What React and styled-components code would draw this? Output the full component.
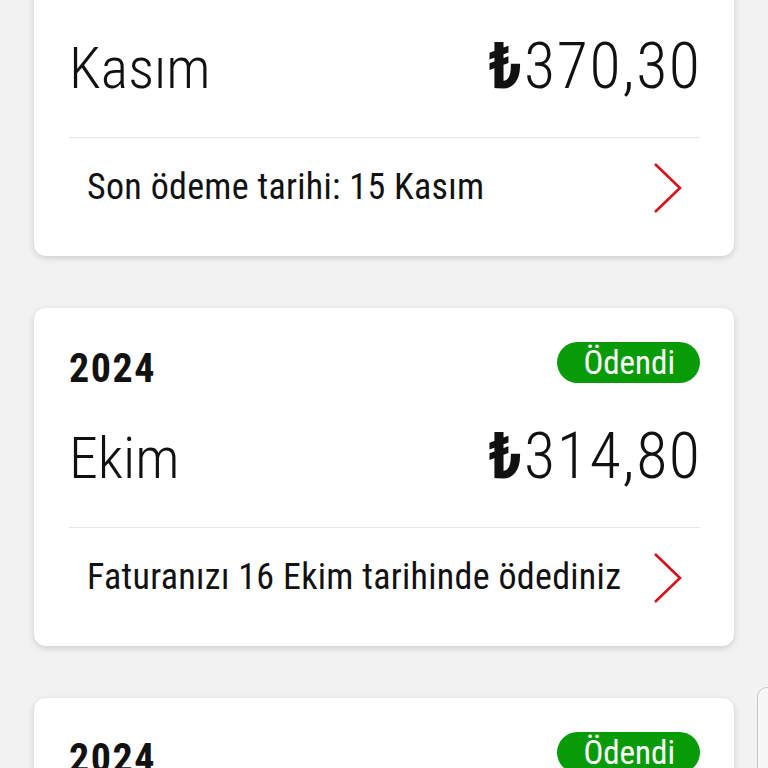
import React from "react";
import styled, { createGlobalStyle } from "styled-components";

const Global = createGlobalStyle`
  html, body { margin: 0; padding: 0; background: #f2f2f2; }
  body { font-family: "Roboto Condensed", "Liberation Sans Narrow", "DejaVu Sans Condensed", "Liberation Sans", sans-serif; color: #111; overflow: hidden; }
`;

const Page = styled.div`
  position: relative;
  width: 768px;
  height: 768px;
  overflow: hidden;
  background: #f2f2f2;
`;

const List = styled.div`
  display: flex;
  flex-direction: column;
  gap: 52px;
  padding: 0 34px;
  margin-top: -82px;
`;

const Card = styled.div`
  background: #fff;
  border-radius: 12px;
  box-shadow: 0 2px 6px rgba(0, 0, 0, 0.16);
  padding: 34px 34px 0 35px;
  display: flex;
  flex-direction: column;
`;

const HeaderRow = styled.div`
  display: flex;
  justify-content: space-between;
  align-items: flex-end;
  height: 41px;
`;

const Year = styled.div`
  font-size: 40px;
  line-height: 1;
  font-weight: 700;
  letter-spacing: 1.5px;
  margin-bottom: -6px;
`;

const Badge = styled.div`
  height: 41px;
  box-sizing: border-box;
  padding: 0 25px 0 26px;
  border-radius: 21px;
  background: #089b08;
  color: #fff;
  font-size: 33px;
  display: flex;
  align-items: center;
`;

const AmountRow = styled.div`
  display: flex;
  justify-content: space-between;
  align-items: baseline;
  height: 145px;
  box-sizing: border-box;
  padding-top: 42px;
  border-bottom: 1.5px solid #e6e6e6;
  line-height: 1;
`;

const Month = styled.div`
  font-size: 58px;
  font-weight: 300;
`;

const Amount = styled.div`
  font-size: 64px;
  font-weight: 300;
  letter-spacing: 1.6px;
  margin-right: -1.6px;
`;

const Lira = styled.span`
  font-weight: 700;
`;

const FooterRow = styled.div`
  display: flex;
  justify-content: space-between;
  align-items: center;
  height: 118px;
  box-sizing: border-box;
  padding: 0 17px 19px 18px;
`;

const FooterText = styled.div`
  font-size: 36px;
  line-height: 1.171;
  letter-spacing: 0.3px;
`;

const EdgeTab = styled.div`
  position: absolute;
  left: 757px;
  top: 687px;
  width: 60px;
  height: 120px;
  border: 1.5px solid #c8c8c8;
  border-radius: 10px;
  background: #f7f7f7;
`;

const Chevron = () => (
  <svg width="30" height="52" viewBox="0 0 30 52">
    <path d="M2 2 L27 26 L2 50" fill="none" stroke="#d90f1a" strokeWidth="2.6" />
  </svg>
);

const bills = [
  { year: "2024", month: "Kasım", amount: "370,30", note: "Son ödeme tarihi: 15 Kasım", paid: false },
  { year: "2024", month: "Ekim", amount: "314,80", note: "Faturanızı 16 Ekim tarihinde ödediniz", paid: true },
  { year: "2024", month: "Eylül", amount: "298,40", note: "Faturanızı 14 Eylül tarihinde ödediniz", paid: true },
];

export default function App() {
  return (
    <Page>
      <Global />
      <List>
        {bills.map((b, i) => (
          <Card key={i}>
            <HeaderRow>
              <Year>{b.year}</Year>
              {b.paid ? <Badge>Ödendi</Badge> : <span />}
            </HeaderRow>
            <AmountRow>
              <Month>{b.month}</Month>
              <Amount>
                <Lira>₺</Lira>
                {b.amount}
              </Amount>
            </AmountRow>
            <FooterRow>
              <FooterText>{b.note}</FooterText>
              <Chevron />
            </FooterRow>
          </Card>
        ))}
      </List>
      <EdgeTab />
    </Page>
  );
}
